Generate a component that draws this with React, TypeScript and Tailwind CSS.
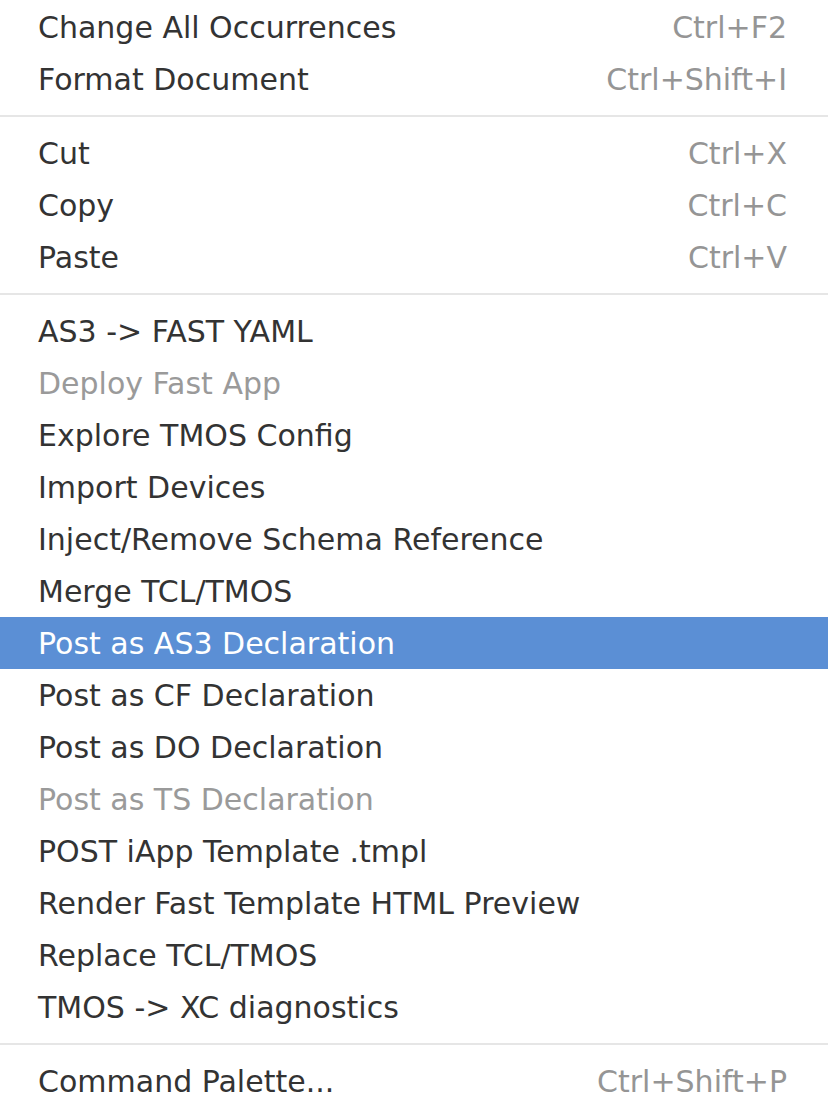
import React from 'react';

type Item = { label: string; shortcut?: string; disabled?: boolean; active?: boolean } | 'sep';

const items: Item[] = [
  { label: 'Change All Occurrences', shortcut: 'Ctrl+F2' },
  { label: 'Format Document', shortcut: 'Ctrl+Shift+I' },
  'sep',
  { label: 'Cut', shortcut: 'Ctrl+X' },
  { label: 'Copy', shortcut: 'Ctrl+C' },
  { label: 'Paste', shortcut: 'Ctrl+V' },
  'sep',
  { label: 'AS3 -> FAST YAML' },
  { label: 'Deploy Fast App', disabled: true },
  { label: 'Explore TMOS Config' },
  { label: 'Import Devices' },
  { label: 'Inject/Remove Schema Reference' },
  { label: 'Merge TCL/TMOS' },
  { label: 'Post as AS3 Declaration', active: true },
  { label: 'Post as CF Declaration' },
  { label: 'Post as DO Declaration' },
  { label: 'Post as TS Declaration', disabled: true },
  { label: 'POST iApp Template .tmpl' },
  { label: 'Render Fast Template HTML Preview' },
  { label: 'Replace TCL/TMOS' },
  { label: 'TMOS -> XC diagnostics' },
  'sep',
  { label: 'Command Palette...', shortcut: 'Ctrl+Shift+P' },
];

export default function App() {
  return (
    <div
      className="w-[828px] h-[1110px] bg-white pt-[1px] text-[30px] overflow-hidden"
      style={{ fontFamily: '"DejaVu Sans", sans-serif' }}
    >
      {items.map((item, i) => {
        if (item === 'sep') {
          return (
            <div key={i} className="h-[22px] flex items-center">
              <div className="h-[2px] w-full bg-[#e6e6e6]" />
            </div>
          );
        }
        const color = item.active
          ? 'bg-[#5b8fd5] text-white'
          : item.disabled
          ? 'text-[#9a9a9a]'
          : 'text-[#333333]';
        return (
          <div key={i} className={`h-[52px] flex items-center justify-between pt-[2px] pl-[38px] pr-[41px] ${color}`}>
            <span className="leading-none">{item.label}</span>
            {item.shortcut && <span className="leading-none text-[#959595]">{item.shortcut}</span>}
          </div>
        );
      })}
    </div>
  );
}
